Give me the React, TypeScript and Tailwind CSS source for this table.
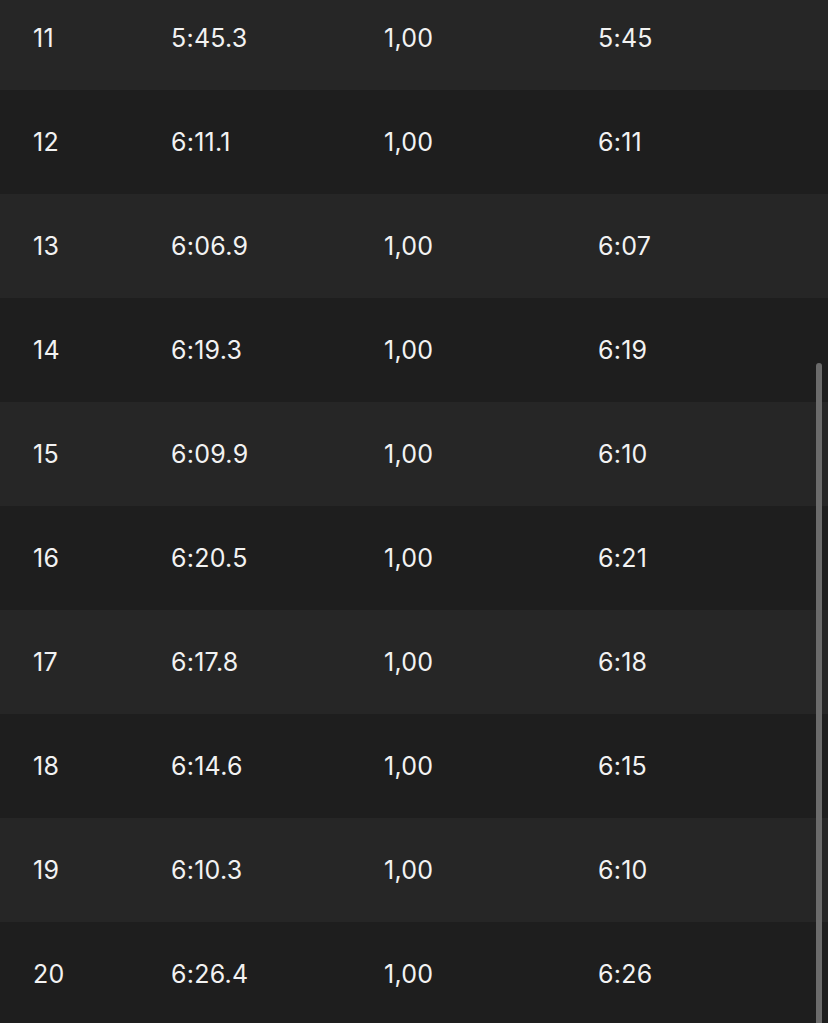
import React from 'react';

const splits = [
  { km: 11, time: '5:45.3', dist: '1,00', pace: '5:45' },
  { km: 12, time: '6:11.1', dist: '1,00', pace: '6:11' },
  { km: 13, time: '6:06.9', dist: '1,00', pace: '6:07' },
  { km: 14, time: '6:19.3', dist: '1,00', pace: '6:19' },
  { km: 15, time: '6:09.9', dist: '1,00', pace: '6:10' },
  { km: 16, time: '6:20.5', dist: '1,00', pace: '6:21' },
  { km: 17, time: '6:17.8', dist: '1,00', pace: '6:18' },
  { km: 18, time: '6:14.6', dist: '1,00', pace: '6:15' },
  { km: 19, time: '6:10.3', dist: '1,00', pace: '6:10' },
  { km: 20, time: '6:26.4', dist: '1,00', pace: '6:26' },
];

export default function App() {
  return (
    <div
      className="relative h-[1023px] w-[828px] overflow-hidden bg-[#1e1e1e] text-[#f2f2f2]"
      style={{ fontFamily: 'Inter, "Noto Sans", sans-serif' }}
    >
      <div className="-mt-[14px]">
        {splits.map((s, i) => (
          <div
            key={s.km}
            className={`grid h-[104px] grid-cols-[138px_213px_214px_1fr] items-center pl-[33px] pt-[2px] text-[25px] tracking-[0.01em] ${
              i % 2 === 0 ? 'bg-[#262626]' : 'bg-[#1e1e1e]'
            }`}
          >
            <span>{s.km}</span>
            <span>{s.time}</span>
            <span>{s.dist}</span>
            <span>{s.pace}</span>
          </div>
        ))}
      </div>

      {/* scrollbar */}
      <div className="absolute right-[6px] top-[363px] h-[680px] w-[6px] rounded-full bg-[#6b6b6b]" />
    </div>
  );
}
